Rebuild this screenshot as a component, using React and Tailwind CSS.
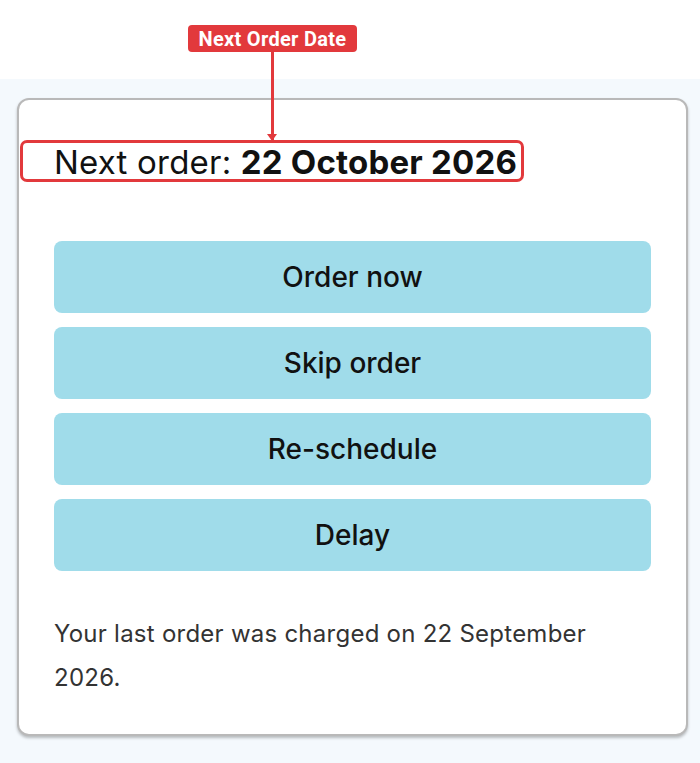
import React from 'react';

const actions = ['Order now', 'Skip order', 'Re-schedule', 'Delay'];

const App = () => {
  return (
    <div className="relative h-[763px] w-[700px] overflow-hidden bg-white" style={{ fontFamily: 'Inter, "Noto Sans", sans-serif' }}>
      {/* Top spacer */}
      <div className="h-[79px] bg-white" />

      {/* Page area */}
      <div className="h-[684px] bg-[#f4f9fd] pl-[17px] pr-[12px] pt-[19px]">
        <div className="rounded-[12px] border-2 border-[#b9b9b9] bg-white px-[35px] pb-[34px] pt-[42px] shadow-[0_2px_3px_rgba(0,0,0,0.25)]">
          <h2 className="text-[33px] leading-[40px] tracking-[0.2px] text-[#111]">
            Next order: <span className="font-bold">22 October 2026</span>
          </h2>

          <div className="mt-[59px] flex flex-col gap-[14px]">
            {actions.map((label) => (
              <button
                key={label}
                className="flex h-[72px] w-full items-center justify-center rounded-[8px] bg-[#a0dcea] text-[28px] font-medium text-[#111]"
              >
                {label}
              </button>
            ))}
          </div>

          <p className="mt-[41px] w-[560px] text-[24px] leading-[44px] tracking-[0.25px] text-[#333]">
            Your last order was charged on 22 September 2026.
          </p>
        </div>
      </div>

      {/* Annotation */}
      <div
        className="absolute left-[188px] top-[25px] flex h-[27px] w-[169px] items-center justify-center rounded-[4px] bg-[#e2393c] text-[20px] font-bold tracking-[0.3px] text-white"
        style={{ fontFamily: 'Roboto, "Liberation Sans", sans-serif' }}
      >
        Next Order Date
      </div>
      <div className="absolute left-[271px] top-[52px] h-[88px] w-[3px] bg-[#e2393c]" />
      <div className="absolute left-[267px] top-[134px] h-0 w-0 border-x-[5.5px] border-t-[7px] border-x-transparent border-t-[#e2393c]" />
      <div className="absolute left-[20px] top-[140px] h-[42px] w-[504px] rounded-[7px] border-[3px] border-[#e2393c]" />
    </div>
  );
};

export default App;
